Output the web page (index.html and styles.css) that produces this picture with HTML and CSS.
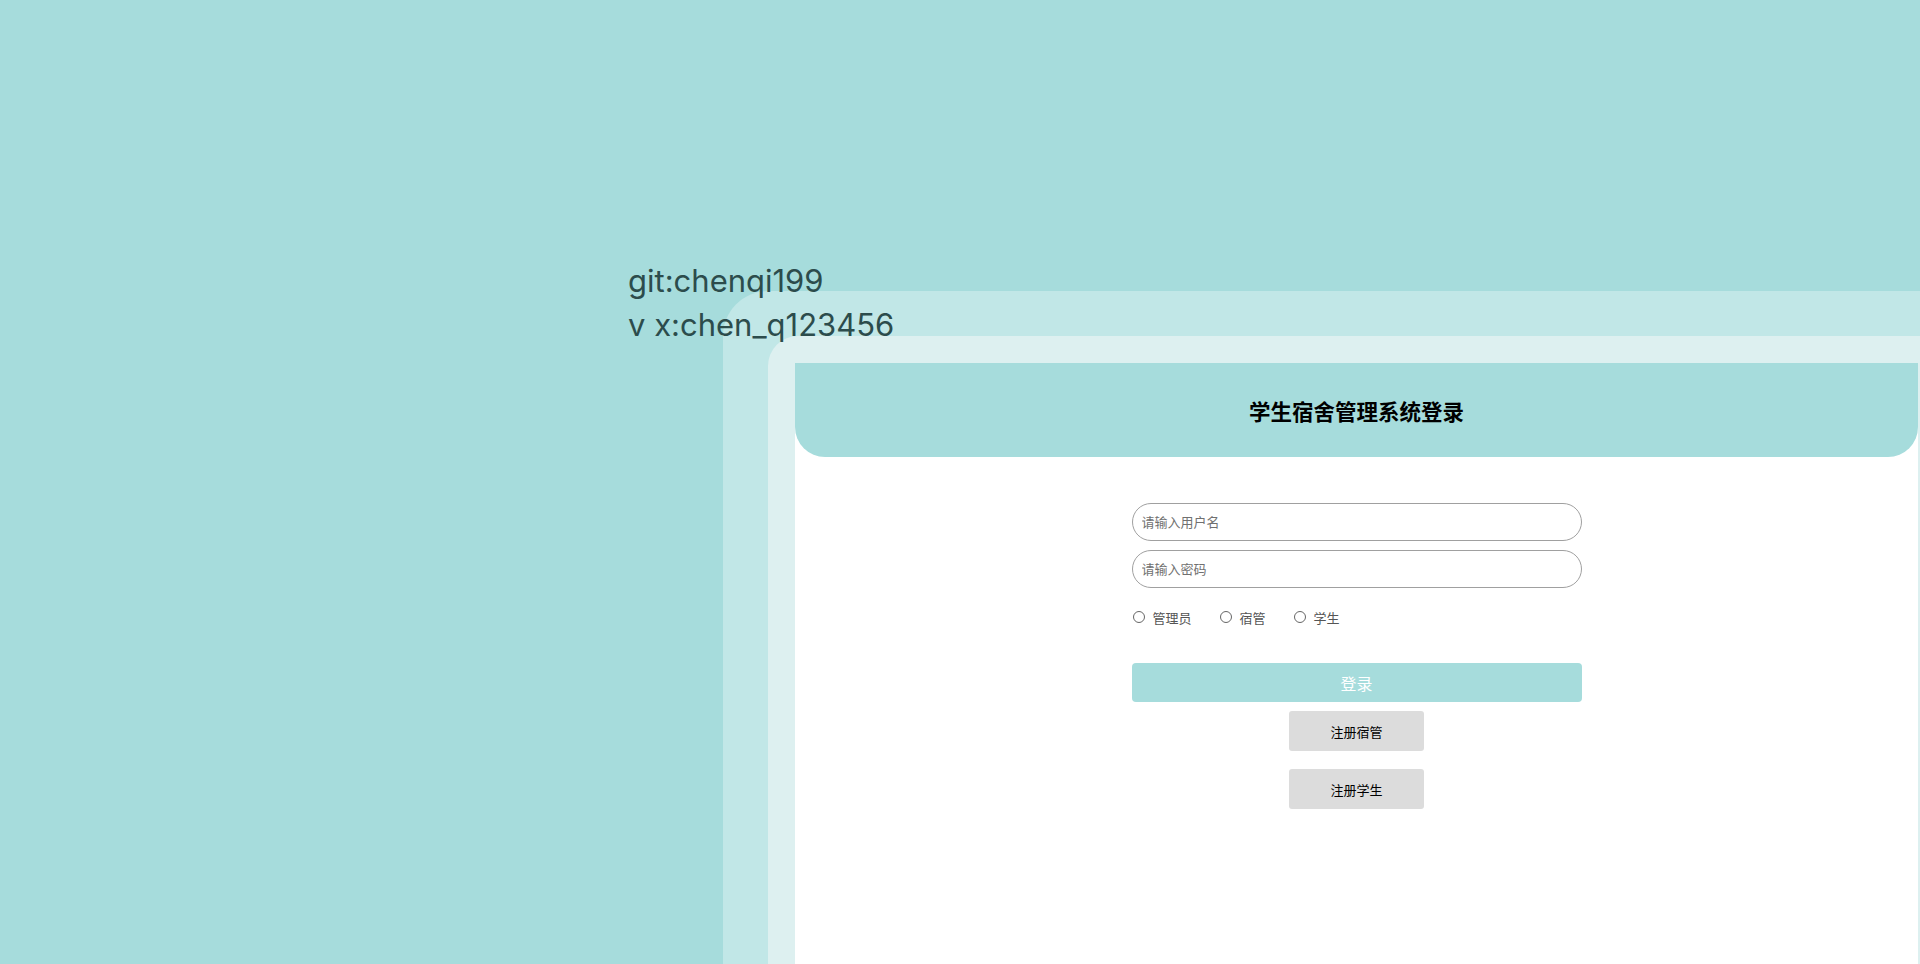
FILE: index.html
```html
<!DOCTYPE html>
<html lang="zh">
<head>
<meta charset="utf-8">
<title>学生宿舍管理系统登录</title>
<link rel="stylesheet" href="styles.css">
</head>
<body>
<div class="page">
  <div class="contact">
    <div>git:chenqi199</div>
    <div>v x:chen_q123456</div>
  </div>
  <div class="frame-outer">
    <div class="frame-inner">
      <div class="card">
        <div class="card-header">
          <h1 class="title">学生宿舍管理系统登录</h1>
        </div>
        <form class="login-form">
          <input class="field" type="text" placeholder="请输入用户名">
          <input class="field" type="password" placeholder="请输入密码">
          <div class="roles">
            <label class="role"><input type="radio" name="role"><span>管理员</span></label>
            <label class="role"><input type="radio" name="role"><span>宿管</span></label>
            <label class="role"><input type="radio" name="role"><span>学生</span></label>
          </div>
          <button type="button" class="btn-login">登录</button>
          <button type="button" class="btn-reg">注册宿管</button>
          <button type="button" class="btn-reg btn-reg-2">注册学生</button>
        </form>
      </div>
    </div>
  </div>
</div>
</body>
</html>
```

FILE: styles.css
```css
* { box-sizing: border-box; }
html, body {
  margin: 0;
  padding: 0;
  width: 1920px;
  height: 964px;
  overflow: hidden;
  background: #a6dcdc;
  font-family: "Noto Sans CJK SC", "Noto Sans", sans-serif;
}
.page {
  position: relative;
  width: 1920px;
  height: 964px;
  padding-top: 291px;
  padding-left: 723px;
}
.contact {
  position: absolute;
  left: 628px;
  top: 259px;
  z-index: 2;
  font-family: Inter, "Noto Sans", sans-serif;
  font-size: 31px;
  font-weight: 400;
  line-height: 44px;
  color: #2c4c4c;
}
.frame-outer {
  height: 673px;
  background: #c1e7e7;
  border-top-left-radius: 45px;
  padding: 45px 0 0 45px;
}
.frame-inner {
  height: 100%;
  background: #ddf0f0;
  border-top-left-radius: 30px;
  padding: 27px 0 0 27px;
}
.card {
  width: 1123px;
  height: 100%;
  background: #fff;
}
.card-header {
  height: 94px;
  background: #a6dcdc;
  border-radius: 0 0 30px 30px;
  display: flex;
  align-items: center;
  justify-content: center;
}
.title {
  margin: 0;
  font-size: 21.5px;
  font-weight: 700;
  color: #000;
}
.login-form {
  width: 450px;
  margin: 46px auto 0;
  display: flex;
  flex-direction: column;
  align-items: center;
}
.field {
  width: 450px;
  height: 38px;
  border: 1px solid #a0a0a0;
  border-radius: 19px;
  padding: 0 9px 2px;
  font-family: inherit;
  font-size: 13px;
  color: #333;
  outline: none;
}
.field + .field { margin-top: 9px; }
.field::placeholder { color: #707070; }
.roles {
  align-self: stretch;
  display: flex;
  gap: 27px;
  margin-top: 21px;
  height: 16px;
  align-items: center;
}
.role {
  display: flex;
  align-items: center;
  font-size: 13px;
  color: #555;
}
.role input {
  appearance: none;
  -webkit-appearance: none;
  width: 12px;
  height: 12px;
  margin: 0 8px 0 1px;
  border: 1px solid #666;
  border-radius: 50%;
  background: #fff;
}
.btn-login {
  width: 450px;
  height: 39px;
  margin-top: 38px;
  border: none;
  border-radius: 4px;
  background: #a6dcdc;
  color: #fff;
  font-family: inherit;
  font-size: 16px;
}
.btn-reg {
  width: 135px;
  height: 40px;
  margin-top: 9px;
  border: none;
  border-radius: 3px;
  background: #dcdcdc;
  color: #000;
  font-family: inherit;
  font-size: 13px;
}
.btn-reg-2 { margin-top: 18px; }
```
